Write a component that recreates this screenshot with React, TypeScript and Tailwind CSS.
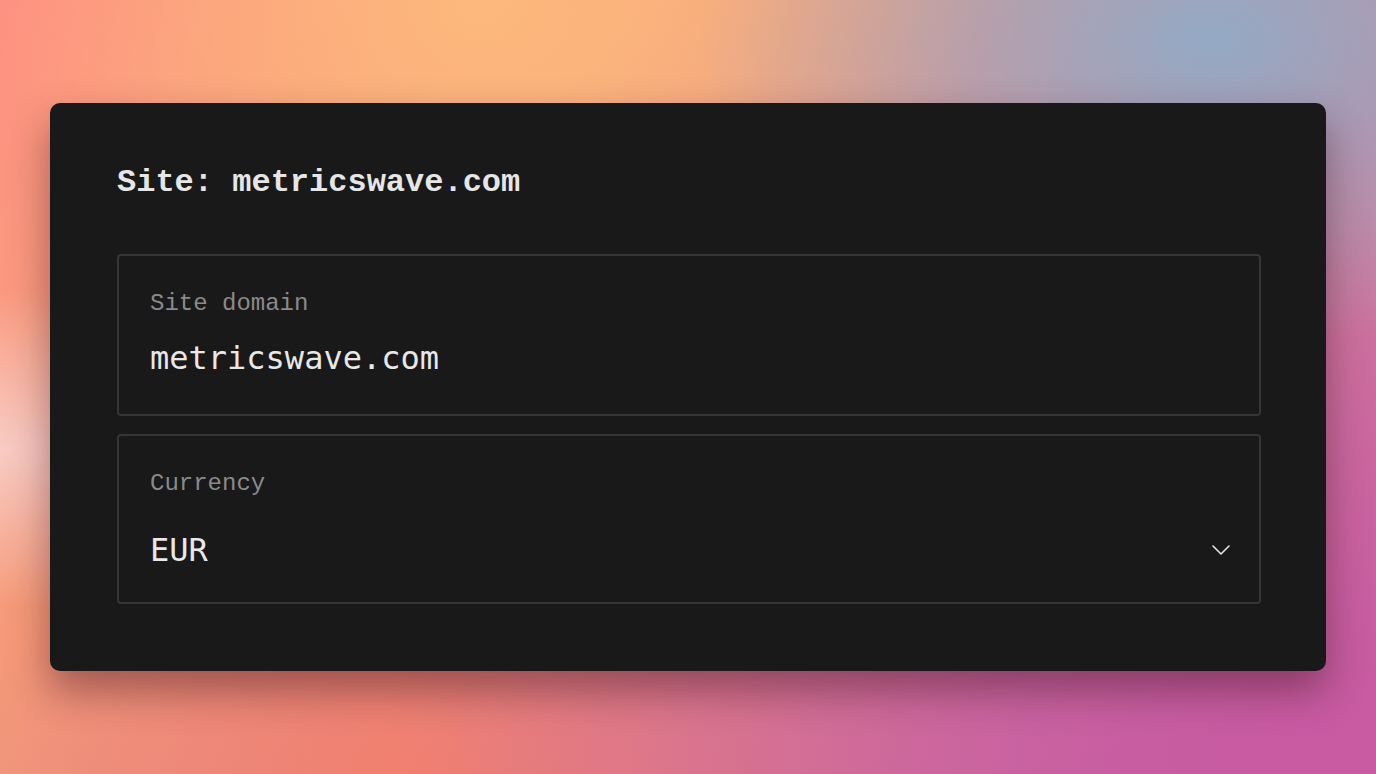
import React from 'react'

const Chevron = () => (
  <svg width="20" height="12" viewBox="0 0 20 12" fill="none" className="shrink-0">
    <polyline points="2,2 10,10 18,2" stroke="#e5e5e5" strokeWidth="1.6" strokeLinecap="round" strokeLinejoin="round" />
  </svg>
)

const App = () => {
  return (
    <div className="min-h-screen w-full px-[50px] pt-[103px] pb-[103px] bg-[radial-gradient(ellipse_at_88%_5%,#93a9c4_0%,rgba(147,169,196,0)_30%),radial-gradient(ellipse_at_35%_0%,#fdb97c_0%,rgba(253,185,124,0)_40%),radial-gradient(ellipse_at_0%_58%,#f8cbc4_0%,rgba(248,203,196,0)_25%),radial-gradient(ellipse_at_95%_95%,#c85aa2_0%,rgba(200,90,162,0)_50%),radial-gradient(ellipse_at_30%_100%,#f2806e_0%,rgba(242,128,110,0)_45%),linear-gradient(135deg,#fe8f82_0%,#f7a47c_30%,#d38a9a_60%,#c862a0_100%)]">
      {/* card */}
      <div className="w-full h-[568px] bg-[#191919] rounded-[10px] shadow-[0_20px_40px_rgba(60,20,30,0.45)] pl-[67px] pr-[65px] pt-[60px]">
        {/* header */}
        <h1 className="text-[32px] leading-[40px] font-bold text-[#e6e6e6] font-['Liberation_Mono',monospace]">
          Site: metricswave.com
        </h1>

        {/* fields */}
        <div className="mt-[51px] flex flex-col gap-[18px]">
          <div className="h-[162px] border-2 border-[#363636] rounded-[4px] px-[31px] pt-[32px]">
            <p className="text-[24px] leading-[32px] text-[#8a8a8a] font-['Liberation_Mono',monospace]">Site domain</p>
            <p className="mt-[18px] text-[32px] leading-[40px] text-[#e8e8e8] font-['DejaVu_Sans_Mono',monospace]">metricswave.com</p>
          </div>
          <div className="h-[170px] border-2 border-[#363636] rounded-[4px] pl-[31px] pr-[28px] pt-[32px]">
            <p className="text-[24px] leading-[32px] text-[#8a8a8a] font-['Liberation_Mono',monospace]">Currency</p>
            <div className="mt-[30px] flex items-center justify-between">
              <p className="text-[32px] leading-[40px] text-[#e8e8e8] font-['DejaVu_Sans_Mono',monospace]">EUR</p>
              <Chevron />
            </div>
          </div>
        </div>
      </div>
    </div>
  )
}

export default App
